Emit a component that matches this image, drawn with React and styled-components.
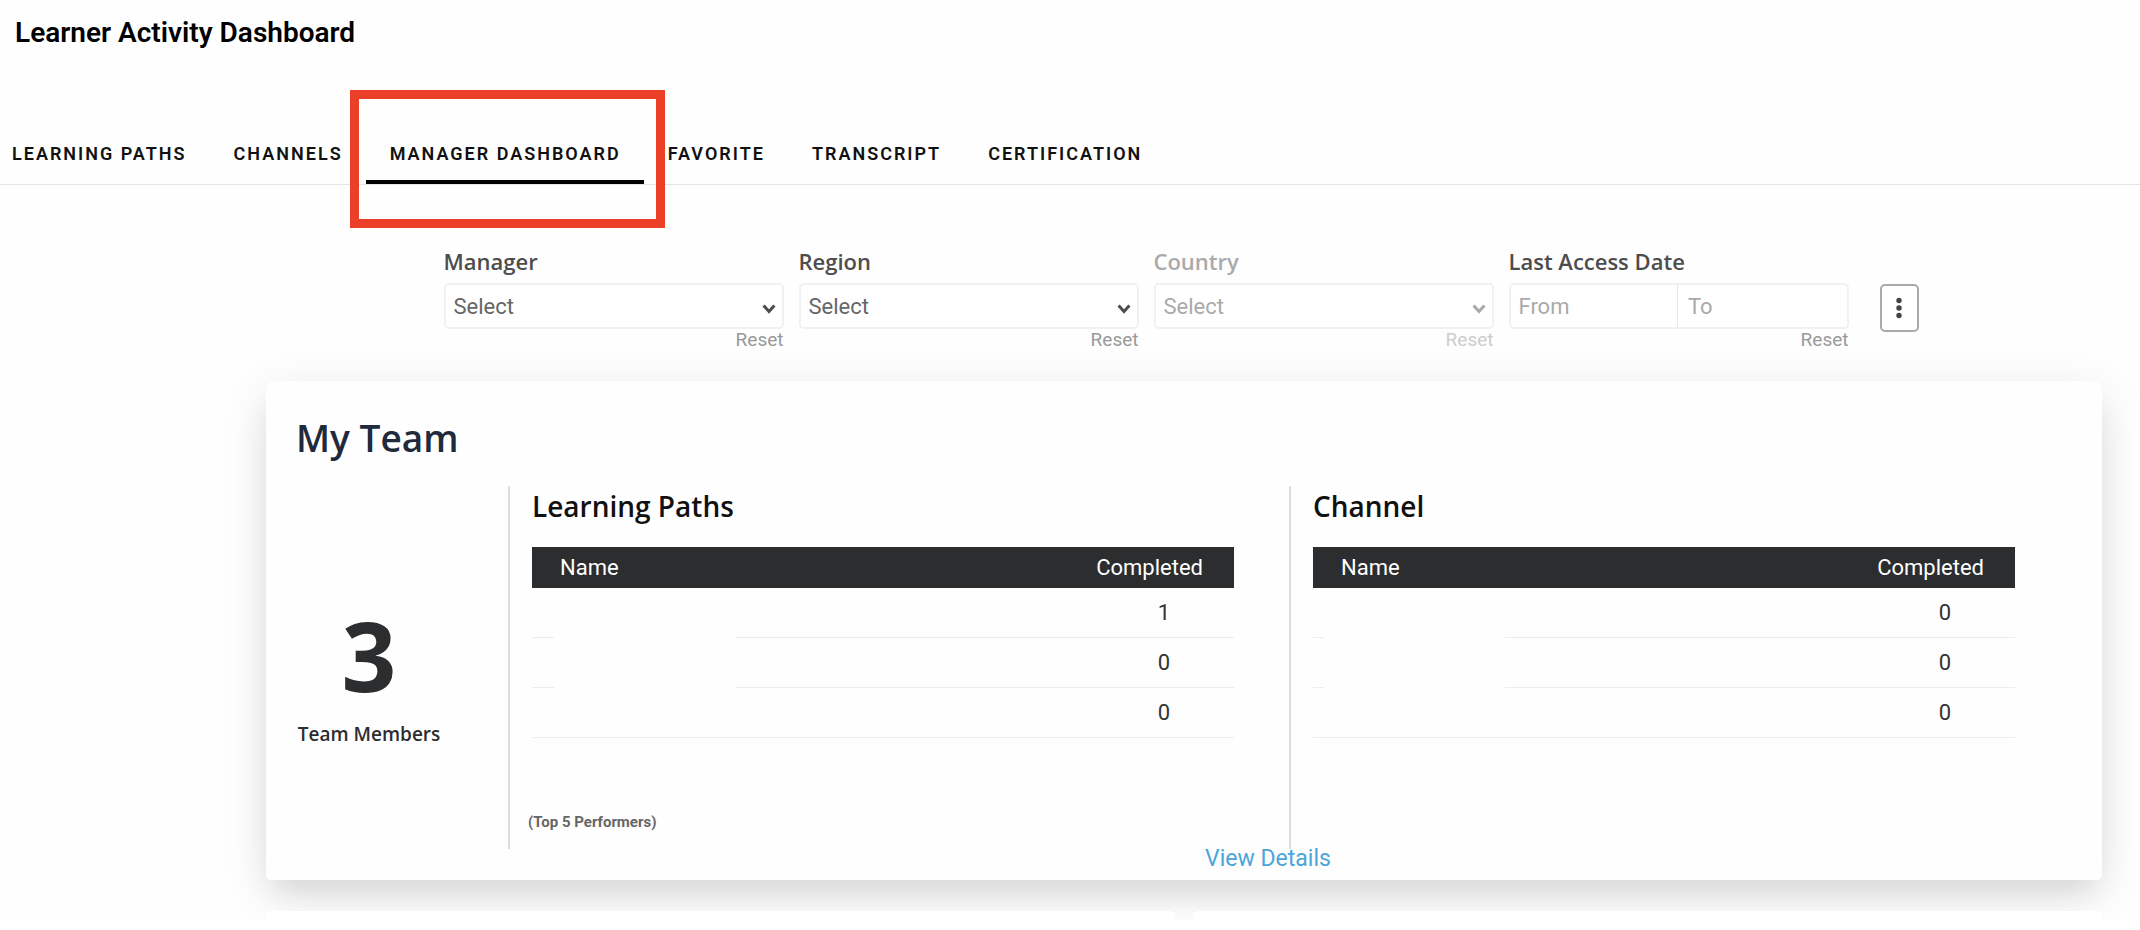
import React from "react";
import styled, { createGlobalStyle, css } from "styled-components";

const TABS = [
    "Learning Paths",
    "Channels",
    "Manager Dashboard",
    "Favorite",
    "Transcript",
    "Certification",
];

const FILTERS = [
    { id: "manager", label: "Manager" },
    { id: "region", label: "Region" },
    { id: "country", label: "Country", disabled: true },
];

const Chevron = () => (
    <ChevronIcon viewBox="0 0 14 10" aria-hidden="true">
        <path d="M1.6 1.6 L7 7.6 L12.4 1.6" fill="none" stroke="currentColor" strokeWidth="3" />
    </ChevronIcon>
);

const SelectFilter = ({ id, label, disabled = false }) => (
    <Filter $disabled={disabled}>
        <FilterLabel htmlFor={id}>{label}</FilterLabel>
        <SelectBox>
            <Select id={id} disabled={disabled}>
                <option>Select</option>
            </Select>
            <Chevron />
        </SelectBox>
        <ResetButton type="button" disabled={disabled}>
            Reset
        </ResetButton>
    </Filter>
);

const DateFilter = () => (
    <Filter>
        <FilterLabel htmlFor="date-from">Last Access Date</FilterLabel>
        <DateRange>
            <DateInput id="date-from" type="text" placeholder="From" />
            <DateInput type="text" placeholder="To" aria-label="Last Access Date to" />
        </DateRange>
        <ResetButton type="button">Reset</ResetButton>
    </Filter>
);

const ScoreTable = ({ title, scores, maskOffset, note }) => (
    <Column>
        <ColumnBody>
            <ColumnTitle>{title}</ColumnTitle>
            <Table>
                <thead>
                    <tr>
                        <th scope="col">Name</th>
                        <th scope="col">Completed</th>
                    </tr>
                </thead>
                <tbody>
                    {scores.map((score, i) => (
                        <tr key={i}>
                            <td>{i < scores.length - 1 && <NameMask $offset={maskOffset} />}</td>
                            <td>{score}</td>
                        </tr>
                    ))}
                </tbody>
            </Table>
        </ColumnBody>
        {note && <Note>{note}</Note>}
    </Column>
);

const App = () => (
    <Page>
        <GlobalStyle />
        <PageTitle>Learner Activity Dashboard</PageTitle>
        <TabBar>
            {TABS.map((tab) => (
                <Tab key={tab} type="button" $active={tab === "Manager Dashboard"}>
                    {tab}
                    {tab === "Manager Dashboard" && <Highlight />}
                </Tab>
            ))}
        </TabBar>
        <Content>
            <FilterBar>
                {FILTERS.map((filter) => (
                    <SelectFilter key={filter.id} {...filter} />
                ))}
                <DateFilter />
                <MoreButton type="button" aria-label="More filters">
                    <svg width="8" height="22" viewBox="0 0 8 22" fill="currentColor">
                        <circle cx="4" cy="3.5" r="2.7" />
                        <circle cx="4" cy="11" r="2.7" />
                        <circle cx="4" cy="18.5" r="2.7" />
                    </svg>
                </MoreButton>
            </FilterBar>
            <TeamCard>
                <CardTitle>My Team</CardTitle>
                <TeamGrid>
                    <Stats>
                        <StatValue>3</StatValue>
                        <StatLabel>Team Members</StatLabel>
                    </Stats>
                    <ScoreTable
                        title="Learning Paths"
                        scores={[1, 0, 0]}
                        maskOffset={22}
                        note="(Top 5 Performers)"
                    />
                    <ScoreTable title="Channel" scores={[0, 0, 0]} maskOffset={11} />
                </TeamGrid>
                <CardFooter>
                    <DetailsLink href="#details">View Details</DetailsLink>
                </CardFooter>
            </TeamCard>
            <NextRow>
                <NextCard />
                <NextCard />
            </NextRow>
        </Content>
    </Page>
);

const GlobalStyle = createGlobalStyle`
    * {
        box-sizing: border-box;
    }

    body {
        margin: 0;
        background: #fff;
        font-family: Roboto, sans-serif;
    }

    button,
    input,
    select {
        font-family: inherit;
    }
`;

const Page = styled.div`
    overflow: hidden;
    background: #fefefe;
    color: #111;
`;

const PageTitle = styled.h1`
    margin: 0;
    padding: 17px 15px 69px;
    font-size: 28px;
    font-weight: 600;
    line-height: 32px;
    color: #000;
`;

const TabBar = styled.nav`
    display: flex;
    border-bottom: 1px solid #e4e4e4;
`;

const Tab = styled.button`
    position: relative;
    padding: 24px 23px 14px 24px;
    border: 0;
    border-bottom: 4px solid ${({ $active }) => ($active ? "#000" : "transparent")};
    background: none;
    font-size: 18px;
    font-weight: 600;
    line-height: 24px;
    letter-spacing: 2px;
    text-transform: uppercase;
    white-space: nowrap;
    color: #111;

    &:first-child {
        padding-left: 12px;
    }
`;

const Highlight = styled.span`
    position: absolute;
    inset: -28px -21px -48px -16px;
    border: 9px solid #ec3f27;
    pointer-events: none;
`;

const Content = styled.main`
    padding: 61px 38px 0 266px;
`;

const FilterBar = styled.form`
    display: flex;
    justify-content: center;
    gap: 15px;
    margin-bottom: 30px;
    padding-right: 6px;
`;

const Filter = styled.div`
    display: flex;
    flex-direction: column;
    flex: 0 1 340px;
    min-width: 0;
    color: ${({ $disabled }) => ($disabled ? "#aaa" : "#4d4d4d")};
`;

const FilterLabel = styled.label`
    margin-bottom: 7px;
    font-family: "Open Sans", sans-serif;
    font-size: 22px;
    font-weight: 600;
    line-height: 30px;
`;

const fieldBox = css`
    height: 46px;
    border: 2px solid #f1f1f1;
    border-radius: 5px;
`;

const SelectBox = styled.div`
    position: relative;
`;

const Select = styled.select`
    ${fieldBox}
    width: 100%;
    padding: 0 8px;
    appearance: none;
    background: #fff;
    font-size: 22px;
    color: #666;

    &:disabled {
        color: #aaa;
        opacity: 1;
    }
`;

const ChevronIcon = styled.svg`
    position: absolute;
    top: 21px;
    right: 8px;
    width: 14px;
    height: 10px;
    pointer-events: none;
`;

const DateRange = styled.div`
    ${fieldBox}
    display: flex;
    background: #fff;
`;

const DateInput = styled.input`
    flex: 1;
    min-width: 0;
    padding: 0 8px;
    border: 0;
    background: none;
    font-size: 22px;

    & + & {
        padding-left: 10px;
        border-left: 1px solid #e8e8e8;
    }

    &::placeholder {
        color: #aaa;
    }
`;

const ResetButton = styled.button`
    align-self: flex-end;
    padding: 0;
    border: 0;
    background: none;
    font-size: 19px;
    line-height: 22px;
    color: #999;

    &:disabled {
        color: #ccc;
    }
`;

const MoreButton = styled.button`
    display: flex;
    align-items: center;
    justify-content: center;
    width: 39px;
    height: 48px;
    margin: 38px 0 0 16px;
    padding: 0;
    border: 2px solid #aaa;
    border-radius: 5px;
    background: #fff;
    color: #444;
`;

const TeamCard = styled.section`
    padding: 31px 32px 11px 30px;
    border-radius: 5px;
    background: #fefefe;
    box-shadow:
        0 12px 48px rgba(0, 0, 0, 0.1),
        0 20px 30px -8px rgba(40, 40, 60, 0.1);
`;

const CardTitle = styled.h2`
    margin: 0 0 22px;
    font-family: "Open Sans", sans-serif;
    font-size: 37px;
    font-weight: 600;
    line-height: 52px;
    color: #1f2a3c;
`;

const TeamGrid = styled.div`
    display: grid;
    grid-template-columns: 212px 1fr 1fr;
    min-height: 363px;
`;

const Stats = styled.div`
    display: flex;
    flex-direction: column;
    align-items: center;
    justify-content: center;
    gap: 18px;
    padding: 18px 66px 0 0;
    font-family: "Open Sans", sans-serif;
`;

const StatValue = styled.strong`
    font-size: 96px;
    font-weight: 700;
    line-height: 96px;
    color: #2c2d2f;
`;

const StatLabel = styled.span`
    font-size: 19px;
    font-weight: 600;
    line-height: 26px;
    white-space: nowrap;
    color: #2c2d2f;
`;

const Column = styled.section`
    display: flex;
    flex-direction: column;
    justify-content: space-between;
    padding: 0 55px 17px 18px;
    border-left: 2px solid #ddd;
`;

const ColumnBody = styled.div`
    padding-left: 4px;
`;

const ColumnTitle = styled.h3`
    margin: 0 0 21px;
    font-family: "Open Sans", sans-serif;
    font-size: 28px;
    font-weight: 600;
    line-height: 40px;
`;

const Table = styled.table`
    width: 100%;
    border-spacing: 0;
    font-size: 22px;
    line-height: 26px;

    th {
        height: 41px;
        padding: 0 31px 0 28px;
        background: #2c2d2f;
        font-weight: 400;
        text-align: left;
        color: #fff;
    }

    td {
        position: relative;
        height: 50px;
        padding: 0 64px 0 28px;
        border-bottom: 1px solid #ececec;
        color: #333;
    }

    th:last-child,
    td:last-child {
        text-align: right;
    }
`;

/* blanks out the learner name together with the rule under it */
const NameMask = styled.span`
    position: absolute;
    top: 4px;
    bottom: -1px;
    left: ${({ $offset }) => $offset}px;
    width: 181px;
    background: #fefefe;
`;

const Note = styled.small`
    font-size: 15px;
    font-weight: 700;
    line-height: 20px;
    color: #666;
`;

const CardFooter = styled.footer`
    display: flex;
    justify-content: center;
    padding-left: 170px;
`;

const DetailsLink = styled.a`
    font-size: 23px;
    line-height: 20px;
    text-decoration: none;
    color: #4ba5da;
`;

const NextRow = styled.div`
    position: relative;
    display: grid;
    grid-template-columns: 1fr 1fr;
    gap: 18px;
    margin-top: 31px;
`;

const NextCard = styled.div`
    height: 9px;
    border-radius: 5px 5px 0 0;
    background: #fff;
`;

export default App;
